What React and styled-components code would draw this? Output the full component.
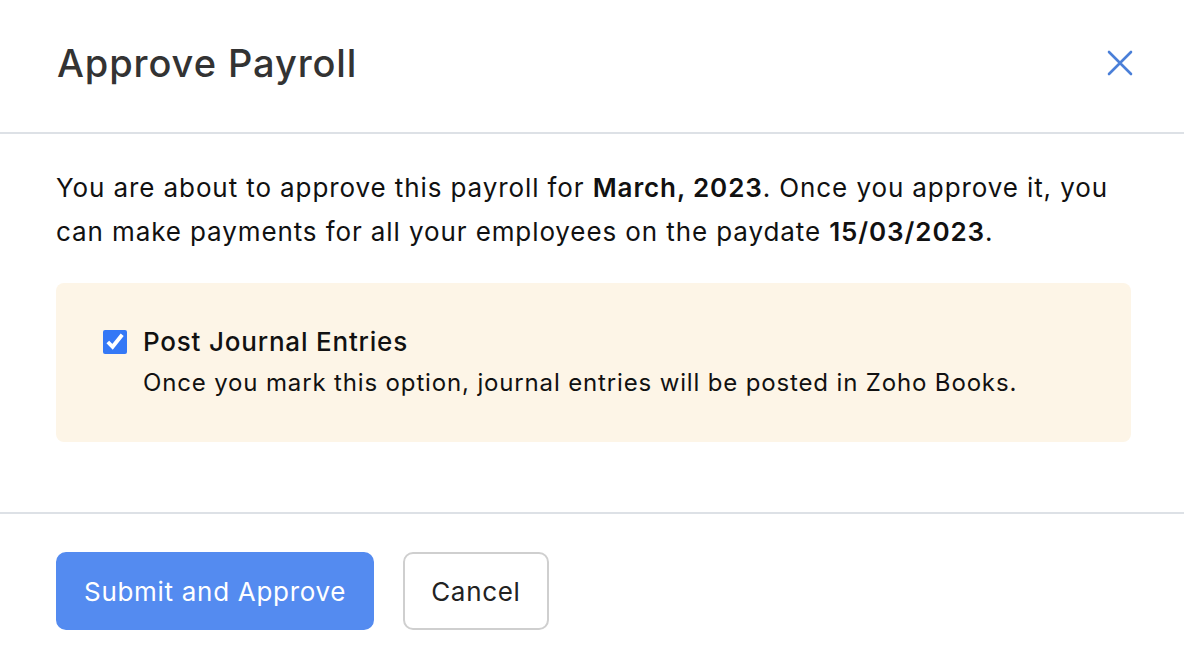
import React, { useState } from 'react'
import styled, { createGlobalStyle } from 'styled-components'

const GlobalStyle = createGlobalStyle`
  html, body {
    margin: 0;
    padding: 0;
    background: #ffffff;
    font-family: Inter, "Noto Sans", sans-serif;
  }
  * { box-sizing: border-box; }
`

const Modal = styled.div`
  width: 1184px;
  min-height: 662px;
  background: #ffffff;
  display: flex;
  flex-direction: column;
`

const Header = styled.div`
  height: 134px;
  flex-shrink: 0;
  padding: 0 46px 6px 57px;
  display: flex;
  align-items: center;
  justify-content: space-between;
  border-bottom: 2px solid #dde1e6;
`

const Title = styled.h1`
  margin: 0;
  font-size: 38px;
  font-weight: 500;
  color: #333333;
  letter-spacing: 0.9px;
`

const CloseButton = styled.button`
  width: 36px;
  height: 36px;
  padding: 0;
  border: none;
  background: transparent;
  display: flex;
  align-items: center;
  justify-content: center;
  cursor: pointer;
`

const Body = styled.div`
  padding: 32px 53px 70px 56px;
  border-bottom: 2px solid #dde1e6;
`

const Message = styled.p`
  margin: 0 0 29px;
  font-size: 26px;
  line-height: 44px;
  letter-spacing: 0.9px;
  color: #111111;

  strong {
    font-weight: 600;
  }
`

const Notice = styled.div`
  background: #fdf5e7;
  border-radius: 8px;
  padding: 44px 40px 42px 47px;
  display: flex;
  gap: 16px;
`

const Check = styled.input`
  width: 24px;
  height: 24px;
  margin: 3px 0 0;
  accent-color: #3478f6;
  flex-shrink: 0;
`

const NoticeText = styled.div`
  display: flex;
  flex-direction: column;
  gap: 9px;
`

const NoticeTitle = styled.label`
  font-size: 26px;
  font-weight: 500;
  color: #111111;
  line-height: 30px;
  letter-spacing: 0.8px;
`

const NoticeDesc = styled.span`
  font-size: 24px;
  color: #111111;
  line-height: 34px;
  letter-spacing: 0.85px;
`

const Footer = styled.div`
  padding: 38px 56px;
  display: flex;
  gap: 29px;
`

const Button = styled.button`
  height: 78px;
  padding: 0 26px;
  font-family: Inter, "Noto Sans", sans-serif;
  font-size: 26px;
  letter-spacing: 0.7px;
  border-radius: 10px;
  cursor: pointer;
  border: 2px solid ${p => (p.$primary ? '#548bf0' : '#cfcfcf')};
  background: ${p => (p.$primary ? '#548bf0' : '#ffffff')};
  color: ${p => (p.$primary ? '#ffffff' : '#222222')};
`

export default function App() {
  const [checked, setChecked] = useState(true)
  return (
    <>
      <GlobalStyle />
      <Modal>
        <Header>
          <Title>Approve Payroll</Title>
          <CloseButton aria-label="Close">
            <svg width="28" height="28" viewBox="0 0 28 28">
              <path d="M3 3 L25 25 M25 3 L3 25" stroke="#4a7fd8" strokeWidth="2.6" strokeLinecap="round" />
            </svg>
          </CloseButton>
        </Header>
        <Body>
          <Message>
            You are about to approve this payroll for <strong>March, 2023</strong>. Once you approve it, you can make payments for all your employees on the paydate <strong>15/03/2023</strong>.
          </Message>
          <Notice>
            <Check id="journal" type="checkbox" checked={checked} onChange={e => setChecked(e.target.checked)} />
            <NoticeText>
              <NoticeTitle htmlFor="journal">Post Journal Entries</NoticeTitle>
              <NoticeDesc>Once you mark this option, journal entries will be posted in Zoho Books.</NoticeDesc>
            </NoticeText>
          </Notice>
        </Body>
        <Footer>
          <Button $primary>Submit and Approve</Button>
          <Button>Cancel</Button>
        </Footer>
      </Modal>
    </>
  )
}
